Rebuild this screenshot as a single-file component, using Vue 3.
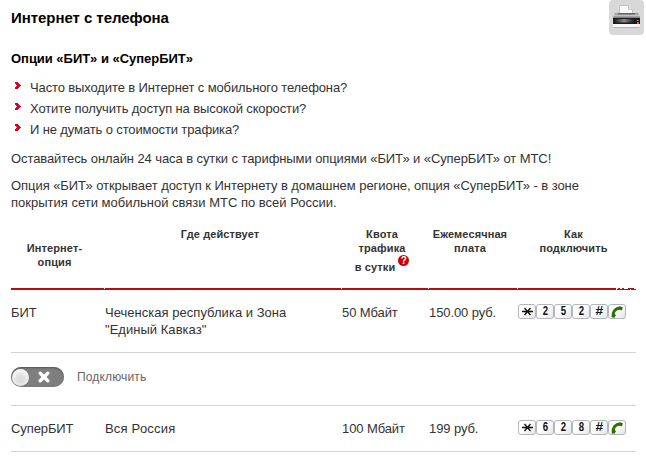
<template>
  <main class="page">
    <header class="page__header">
      <h1 class="page__title">Интернет с телефона</h1>
      <button class="print" type="button" aria-label="Печать">
        <svg width="35" height="35" viewBox="0 0 35 35">
          <defs>
            <linearGradient id="printer-body" x1="0" y1="0" x2="0" y2="1">
              <stop offset="0" stop-color="#8a8a8a" />
              <stop offset="0.4" stop-color="#c4c4c4" />
              <stop offset="1" stop-color="#555" />
            </linearGradient>
            <linearGradient id="printer-slot" x1="0" y1="0" x2="1" y2="0">
              <stop offset="0" stop-color="#222" />
              <stop offset="0.45" stop-color="#888" />
              <stop offset="1" stop-color="#111" />
            </linearGradient>
          </defs>
          <path d="M10.5 14V5.500h9l4 4V14z" fill="#f8f8f8" stroke="#c4c4c4" />
          <path d="M19.5 5.500v4h4" fill="#e4e4e4" stroke="#c4c4c4" />
          <path d="M6 13h23l2 4v2H4v-2z" fill="url(#printer-body)" />
          <path d="M9 13h17v1.500H9z" fill="#666" />
          <path d="M4 18h27v6H4z" fill="#1c1c1c" />
          <path d="M6 19h20v3.500H6z" fill="url(#printer-slot)" />
          <path d="M4 24h27v2q0 1-1 1H5q-1 0-1-1z" fill="#f8f8f8" />
          <path d="M4.500 27.500h26" stroke="#b4b4b4" />
          <path d="M28 20h1.500v1H28z" fill="#7b7" />
          <path d="M28 22h2v2h-2z" fill="#e65b4d" />
        </svg>
      </button>
    </header>

    <h2 class="page__subtitle">Опции «БИТ» и «СуперБИТ»</h2>

    <ul class="questions">
      <li v-for="question in questions" :key="question" class="questions__item">
        <svg class="questions__arrow" width="6" height="7" viewBox="0 0 6 7" shape-rendering="crispEdges">
          <path d="M0 0h3v1h1v1h1v1h1v1h-1v1h-1v1h-1v1H0V5h1V4h1V3H1V2H0z" fill="#e30028" />
        </svg>
        <span>{{ question }}</span>
      </li>
    </ul>

    <p class="text text--intro">Оставайтесь онлайн 24 часа в сутки с тарифными опциями «БИТ» и «СуперБИТ» от МТС!</p>
    <p class="text">
      <span class="text__tight">Опция «БИТ» открывает доступ к Интернету в домашнем регионе, опция «СуперБИТ» - в зоне</span><br />
      покрытия сети мобильной связи МТС по всей России.
    </p>

    <section class="tariffs">
      <div class="row row--head">
        <div class="head head--option">Интернет-<br />опция</div>
        <div class="head">Где действует</div>
        <div class="head">
          Квота<br />трафика
          <div class="head__quota">
            в сутки
            <span class="help">?</span>
          </div>
        </div>
        <div class="head">Ежемесячная<br />плата</div>
        <div class="head head--last">Как<br />подключить</div>
      </div>

      <template v-for="tariff in tariffs" :key="tariff.name">
        <div class="row" :class="{ 'row--tall': tariff.canSwitch }">
          <div class="row__value">{{ tariff.name }}</div>
          <div class="row__region">{{ tariff.region }}</div>
          <div class="row__value">{{ tariff.quota }}</div>
          <div class="row__value">{{ tariff.price }}</div>
          <div class="keys">
            <span v-for="(key, index) in tariff.code" :key="index" class="key">
              <svg v-if="key === '*'" width="11" height="9" viewBox="0 0 11 9">
                <path d="M0 4.500h11M2.500 1l6 7M8.500 1l-6 7" stroke="#111" stroke-width="1.300" />
              </svg>
              <span v-else :class="key === '#' ? 'key__hash' : 'key__digit'">{{ key }}</span>
            </span>
            <span class="key">
              <svg width="12" height="12" viewBox="0 0 12 12">
                <path d="M.8 11.500C-.2 6 3 1 9 .3l2.800 1-.8 3-3-.6C5.500 4.200 3.800 6 3.800 8L5 9.300l-1.600 2.500z" fill="#2f7100" />
              </svg>
            </span>
          </div>
        </div>
        <div v-if="tariff.canSwitch" class="connect">
          <button class="switch" type="button" aria-label="Подключить">
            <span class="switch__knob"></span>
            <svg class="switch__cross" width="12" height="12" viewBox="0 0 12 12">
              <path d="M2.200 2.200l7.600 7.600M9.800 2.200l-7.600 7.600" stroke="#fff" stroke-width="3.400" stroke-linecap="round" />
            </svg>
          </button>
          <span class="connect__label">Подключить</span>
        </div>
      </template>
    </section>
  </main>
</template>

<script setup>
const questions = [
  'Часто выходите в Интернет с мобильного телефона?',
  'Хотите получить доступ на высокой скорости?',
  'И не думать о стоимости трафика?'
];

const tariffs = [
  {
    name: 'БИТ',
    region: 'Чеченская республика и Зона\n"Единый Кавказ"',
    quota: '50 Мбайт',
    price: '150.00 руб.',
    code: '*252#',
    canSwitch: true
  },
  {
    name: 'СуперБИТ',
    region: 'Вся Россия',
    quota: '100 Мбайт',
    price: '199 руб.',
    code: '*628#',
    canSwitch: false
  }
];
</script>

<style>
body {
  margin: 0;
  background: #fff;
}
</style>

<style scoped>
.page {
  box-sizing: border-box;
  width: 646px;
  height: 457px;
  padding-left: 11px;
  overflow: hidden;
  color: #333;
  font: 13px/17px "Liberation Sans", Arial, sans-serif;
  white-space: nowrap;
}

.page__header {
  display: flex;
  justify-content: space-between;
  height: 50px;
  padding-right: 2px;
}

.page__title {
  margin: 9px 0 0;
  color: #000;
  font-size: 15px;
  line-height: 18px;
  letter-spacing: -0.05px;
}

.print {
  width: 35px;
  height: 35px;
  padding: 0;
  border: 0;
  border-radius: 4px;
  background: #d8d8d8;
}

.print svg {
  display: block;
}

.page__subtitle {
  margin: 0;
  color: #000;
  font-size: 13px;
  line-height: 17px;
  letter-spacing: -0.03px;
}

.questions {
  margin: 10px 0 0;
  padding: 0;
  list-style: none;
}

.questions__item {
  display: flex;
  height: 21px;
  line-height: 21px;
  letter-spacing: -0.122px;
}

.questions__arrow {
  margin: 5px 9px 0 4px;
}

.text {
  margin: 0;
}

.text--intro {
  margin: 10px 0;
  letter-spacing: -0.087px;
}

.text__tight {
  letter-spacing: -0.055px;
}

.tariffs {
  width: 625px;
  margin-top: 16px;
}

.row {
  display: grid;
  grid-template-columns: 94px 237px 87px 89px 118px;
  box-sizing: border-box;
  height: 46px;
  padding-top: 14px;
  border-bottom: 1px solid #d3d3d3;
}

.row--tall {
  height: 63px;
}

.row--head {
  height: 63px;
  padding-top: 0;
  border-bottom: 0;
}

.row__value {
  letter-spacing: -0.1px;
}

.row__region {
  letter-spacing: 0.2px;
  white-space: pre;
}

.row--tall .row__region {
  letter-spacing: 0.03px;
}

/* the red rule has a small notch where two columns meet */
.head {
  box-sizing: border-box;
  padding-right: 7px;
  background:
    linear-gradient(#fff, #fff) right bottom 1px / 1px 1px no-repeat,
    linear-gradient(#b90b12, #b90b12) bottom / 100% 2px no-repeat;
  font-size: 11px;
  font-weight: bold;
  line-height: 14px;
  letter-spacing: 0.1px;
  text-align: center;
}

.head--option {
  padding-top: 14px;
}

/* worn right end of the rule */
.head--last {
  background:
    linear-gradient(#fff, #fff) right 18px bottom 1px / 2px 1px no-repeat,
    linear-gradient(#fff, #fff) right 14px bottom 1px / 2px 1px no-repeat,
    linear-gradient(#fff, #fff) right 19px bottom 0 / 1px 1px no-repeat,
    linear-gradient(#fff, #fff) right 8px bottom 1px / 4px 1px no-repeat,
    linear-gradient(#fff, #fff) right 5px bottom 0 / 1px 1px no-repeat,
    linear-gradient(#fff, #fff) right 0 bottom 1px / 2px 1px no-repeat,
    linear-gradient(#b90b12, #b90b12) bottom / 100% 2px no-repeat;
}

.head__quota {
  display: flex;
  justify-content: center;
  gap: 3px;
  padding-top: 5px;
}

.help {
  width: 11px;
  height: 11px;
  margin-top: -5px;
  border-radius: 50%;
  background: #c9000b;
  color: #fff;
  font-size: 10px;
  line-height: 11px;
}

.keys {
  display: flex;
  align-items: flex-start;
}

.key {
  display: flex;
  align-items: center;
  justify-content: center;
  box-sizing: border-box;
  width: 18px;
  height: 15px;
  border: 1px solid #b4b6ba;
  border-radius: 3px;
  background: linear-gradient(135deg, #fff 40%, #e6e6e6);
  color: #111;
  font: bold 12px/13px "Liberation Sans", Arial, sans-serif;
}

.key__digit {
  transform: scaleX(0.8);
}

.key__hash {
  transform: scaleX(1.15);
}

.connect {
  display: flex;
  align-items: flex-start;
  box-sizing: border-box;
  height: 53px;
  padding-top: 14px;
  border-bottom: 1px solid #d3d3d3;
}

.switch {
  display: flex;
  align-items: center;
  box-sizing: border-box;
  width: 53px;
  height: 20px;
  padding: 0 0 0 1px;
  border: 0;
  border-radius: 10px;
  background: #7e7e7e;
  box-shadow: inset 0 1px 2px #555;
}

.switch__knob {
  width: 17px;
  height: 17px;
  border-radius: 50%;
  background: radial-gradient(circle at 50% 60%, #ddd 20%, #f8f8f8 75%);
}

.switch__cross {
  margin-left: 9px;
}

.connect__label {
  margin: 2px 0 0 13px;
  color: #666;
  font-size: 12px;
  letter-spacing: 0.15px;
}
</style>
